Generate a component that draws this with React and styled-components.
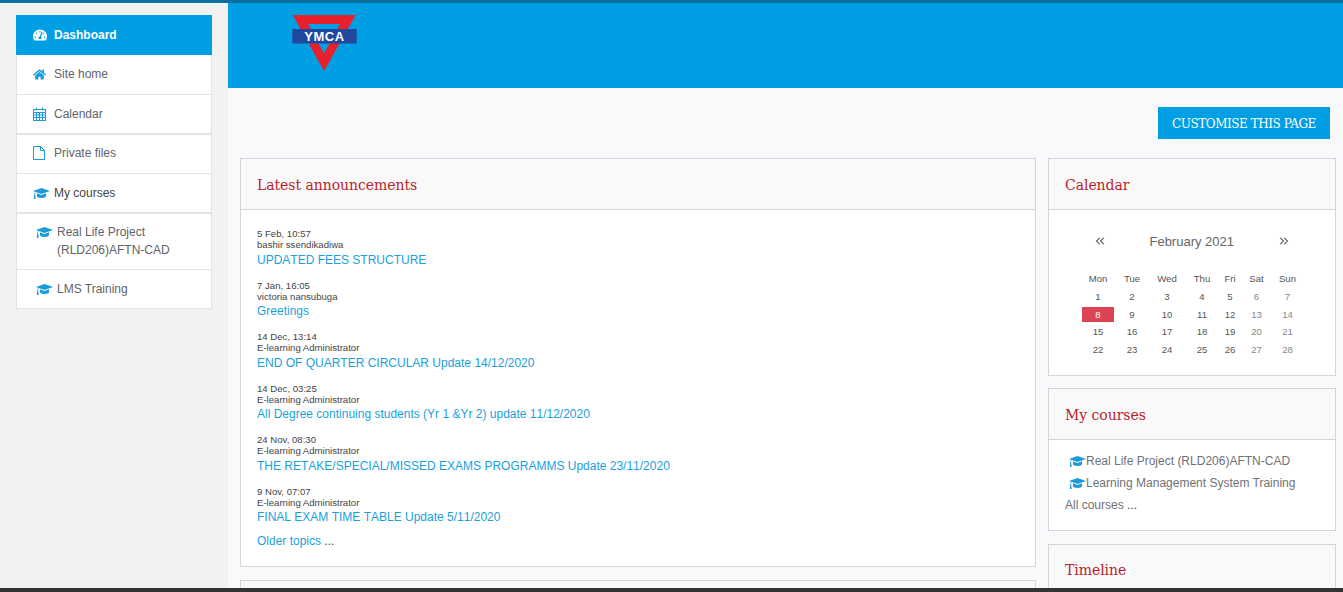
import React from "react";
import styled, { createGlobalStyle } from "styled-components";
import { FaTachometerAlt, FaHome } from "react-icons/fa";
import { ChevronsLeft, ChevronsRight } from "lucide-react";

const Global = createGlobalStyle`
  html, body { margin: 0; padding: 0; height: 592px; overflow: hidden; }
  body { font-family: "Liberation Sans", Arial, sans-serif; font-size: 12px; color: #666; background: #f2f2f3; }
  * { box-sizing: border-box; }
`;

const Page = styled.div`
  display: flex;
  width: 1343px;
  height: 592px;
  overflow: hidden;
`;
const TopLine = styled.div`
  position: fixed; left: 0; right: 0; top: 0; height: 3px; background: #0a6f9e; z-index: 3;
`;
const BottomLine = styled.div`
  position: fixed; left: 0; right: 0; bottom: 0; height: 4px; background: #333; z-index: 3;
`;
const Sidebar = styled.nav`
  width: 228px;
  flex: none;
  padding: 15px 16px 0;
  background: #f2f2f3;
`;
const NavList = styled.ul`
  list-style: none; margin: 0; padding: 0; width: 196px;
`;
const NavItem = styled.li`
  display: flex;
  align-items: ${p => (p.$tall ? "flex-start" : "center")};
  height: ${p => p.$h}px;
  padding: ${p => (p.$tall ? 9 : 0)}px 0 ${p => p.$pb || 0}px ${p => (p.$child ? 19 : p.$active ? 17 : 16)}px;
  color: ${p => (p.$active ? "#fff" : p.$dark ? "#444" : "#5e6468")};
  font-weight: ${p => (p.$active ? 700 : 400)};
  line-height: 18px;
  background: ${p => (p.$active ? "#009ee3" : "#fff")};
  border: ${p => (p.$active ? "none" : "1px solid #e2e3e4")};
  border-top: none;
  border-bottom-width: ${p => (p.$thick ? 2 : 1)}px;
`;
const NavIcon = styled.span`
  display: inline-flex;
  justify-content: flex-start;
  width: 21px;
  flex: none;
  font-size: ${p => p.$size || 14}px;
  color: ${p => (p.$active ? "#fff" : "#1c9ad8")};
  margin-top: ${p => (p.$tall ? "3px" : "0")};
`;
const Glyph = styled.svg`
  display: block;
  fill: ${p => (p.$line ? "none" : "currentColor")};
  stroke: ${p => (p.$line ? "currentColor" : "none")};
`;
const Content = styled.div`
  flex: 1;
  min-width: 0;
  background: #f7f9fb;
`;
const Banner = styled.header`
  height: 88px;
  background: #009ee3;
  padding: 15px 0 0 64px;
`;
const Toolbar = styled.div`
  display: flex;
  justify-content: flex-end;
  padding: 19px 13px 19px 0;
`;
const CustomButton = styled.button`
  width: 172px;
  height: 32px;
  padding: 2px 0 0;
  border: none;
  background: #009ee3;
  color: #fff;
  font-family: "DejaVu Serif", serif;
  font-size: 12px;
  letter-spacing: -0.45px;
`;
const Columns = styled.div`
  display: flex;
  align-items: flex-start;
  gap: 12px;
  padding-left: 12px;
`;
const MainCol = styled.div`
  width: 796px;
  flex: none;
  display: flex;
  flex-direction: column;
  gap: 13px;
`;
const SideCol = styled.div`
  width: 288px;
  flex: none;
  display: flex;
  flex-direction: column;
  gap: 12px;
`;
const Card = styled.section`
  border: 1px solid #d3d6da;
  background: #fff;
`;
const LastCard = styled(Card)`
  margin-top: 1px;
`;
const CardHead = styled.div`
  height: 51px;
  display: flex;
  align-items: center;
  padding: ${p => (p.$noline ? "0 0 2px 16px" : "2px 0 0 16px")};
  background: #f9f9fa;
  border-bottom: ${p => (p.$noline ? "none" : "1px solid #d3d6da")};
`;
const CardTitle = styled.h3`
  margin: 0;
  font-family: "DejaVu Serif", serif;
  font-weight: 400;
  font-size: 14px;
  letter-spacing: -0.05px;
  color: #b81f2b;
`;
const AnnBody = styled.div`
  padding: 18px 16px 18px;
  height: 356px;
`;
const Post = styled.div`
  margin-bottom: 11.1px;
`;
const PostMeta = styled.div`
  font-size: 9.6px;
  line-height: 11px;
  color: #444;
`;
const PostLink = styled.a`
  display: block;
  font-size: 12px;
  font-kerning: none;
  line-height: 18px;
  margin-top: 0.5px;
  color: #1a9fdc;
`;
const Older = styled.div`
  font-size: 12px;
  line-height: 18px;
  color: #1a9fdc;
  margin-top: -6px;
`;
const Dots = styled.span`
  color: #444;
`;
const CalBody = styled.div`
  height: 165px;
  padding: 22px 0 0 32px;
`;
const CalNav = styled.div`
  display: flex;
  justify-content: space-between;
  align-items: center;
  width: 197.5px;
  margin-left: 12px;
  height: 18px;
  font-size: 13px;
  color: #666;
`;
const CalGrid = styled.div`
  display: grid;
  grid-template-columns: 34px 34px 36px 34px 22px 31px 31px;
  margin-top: 20px;
`;
const CalCell = styled.div`
  height: 17.8px;
  line-height: 18px;
  text-align: center;
  font-size: 9.6px;
  color: ${p => (p.$today ? "#fff" : p.$weekend ? "#888" : "#555")};
  background: ${p => (p.$today ? "#dc4453" : "transparent")};
  ${p => p.$today && "height: 15px; line-height: 15px; margin: 1px 1px 1.8px;"}
`;
const CoursesBody = styled.div`
  padding: 10px 16px 0;
  height: 90px;
`;
const CourseRow = styled.div`
  display: flex;
  align-items: center;
  height: 22px;
  padding-left: 4px;
  font-size: 12px;
  color: #6f7275;
`;
const CourseIcon = styled.span`
  display: inline-flex;
  width: 17px;
  color: #1c9ad8;
`;
const AllCourses = styled.div`
  height: 22px;
  line-height: 22px;
  font-size: 12px;
  color: #6f7275;
`;
const Logo = styled.svg`
  display: block;
`;

const Cap = () => (
  <Glyph width="17" height="13" viewBox="0 0 17 13">
    <path d="M8.5 1 L17 4 L8.5 7 L2.8 5 C2.3 5.6 2 6.5 1.9 7.3 C2.2 7.5 2.4 7.8 2.3 8.2 L2.6 12 H0.8 L1.2 8.2 C1 7.9 1 7.5 1.3 7.3 C1.4 6.3 1.7 5.3 2.2 4.7 L0 4 Z" />
    <path d="M4 6.3 L8.5 7.9 L13 6.3 L13.1 9 C13.1 10.2 11 11 8.5 11 C6 11 3.9 10.2 3.9 9 Z" />
  </Glyph>
);
const Cal = () => (
  <Glyph $line width="13" height="14" viewBox="0 0 13 14" strokeWidth="1">
    <rect x="0.5" y="2.5" width="12" height="11" />
    <path d="M0.5 5.5 H12.5 M0.5 8 H12.5 M0.5 10.5 H12.5 M3.5 5.5 V13.5 M6.5 5.5 V13.5 M9.5 5.5 V13.5 M3.5 0.5 V3.5 M9.5 0.5 V3.5" />
  </Glyph>
);
const FileIcon = () => (
  <Glyph $line width="12" height="14" viewBox="0 0 12 14" strokeWidth="1">
    <path d="M0.5 0.5 H7.5 L11.5 4.5 V13.5 H0.5 Z M7.5 0.5 V4.5 H11.5" />
  </Glyph>
);

const nav = [
  { label: "Dashboard", icon: <FaTachometerAlt />, h: 40, active: true },
  { label: "Site home", icon: <FaHome />, size: 13, h: 40, pb: 1 },
  { label: "Calendar", icon: <Cal />, h: 40, thick: true },
  { label: "Private files", icon: <FileIcon />, h: 39, pb: 2 },
  { label: "My courses", icon: <Cap />, h: 40, thick: true, dark: true },
  { label: <>Real Life Project<br />(RLD206)AFTN-CAD</>, icon: <Cap />, h: 56, child: true, tall: true },
  { label: "LMS Training", icon: <Cap />, h: 39, child: true },
];
const posts = [
  ["5 Feb, 10:57", "bashir ssendikadiwa", "UPDATED FEES STRUCTURE"],
  ["7 Jan, 16:05", "victoria nansubuga", "Greetings"],
  ["14 Dec, 13:14", "E-learning Administrator", "END OF QUARTER CIRCULAR Update 14/12/2020"],
  ["14 Dec, 03:25", "E-learning Administrator", "All Degree continuing students (Yr 1 &Yr 2) update 11/12/2020"],
  ["24 Nov, 08:30", "E-learning Administrator", "THE RETAKE/SPECIAL/MISSED EXAMS PROGRAMMS Update 23/11/2020"],
  ["9 Nov, 07:07", "E-learning Administrator", "FINAL EXAM TIME TABLE Update 5/11/2020"],
];
const days = ["Mon", "Tue", "Wed", "Thu", "Fri", "Sat", "Sun"];
const dates = Array.from({ length: 28 }, (_, i) => i + 1);

export default function App() {
  return (
    <Page>
      <Global />
      <TopLine />
      <Sidebar>
        <NavList>
          {nav.map((n, i) => (
            <NavItem key={i} $h={n.h} $pb={n.pb} $active={n.active} $thick={n.thick} $child={n.child} $tall={n.tall} $dark={n.dark}>
              <NavIcon $size={n.size} $active={n.active} $tall={n.tall}>{n.icon}</NavIcon>
              <span>{n.label}</span>
            </NavItem>
          ))}
        </NavList>
      </Sidebar>
      <Content>
        <Banner>
          <Logo width="65" height="56" viewBox="0 0 65 56" aria-label="YMCA">
            <path d="M0.7 0 H63.7 L32 56 Z M16 9 H48 L32 38.5 Z" fill="#e8202e" fillRule="evenodd" />
            <rect x="0.3" y="14" width="64.4" height="14.5" fill="#2148a0" />
            <text x="32.5" y="26" textAnchor="middle" fill="#fff" fontFamily="Liberation Sans, Arial, sans-serif" fontWeight="700" fontSize="13" letterSpacing="0.6">YMCA</text>
          </Logo>
        </Banner>
        <Toolbar>
          <CustomButton>CUSTOMISE THIS PAGE</CustomButton>
        </Toolbar>
        <Columns>
          <MainCol>
            <Card>
              <CardHead><CardTitle>Latest announcements</CardTitle></CardHead>
              <AnnBody>
                {posts.map((p, i) => (
                  <Post key={i}>
                    <PostMeta>{p[0]}</PostMeta>
                    <PostMeta>{p[1]}</PostMeta>
                    <PostLink>{p[2]}</PostLink>
                  </Post>
                ))}
                <Older>Older topics <Dots>...</Dots></Older>
              </AnnBody>
            </Card>
            <Card>
              <CardHead $noline />
            </Card>
          </MainCol>
          <SideCol>
            <Card>
              <CardHead><CardTitle>Calendar</CardTitle></CardHead>
              <CalBody>
                <CalNav>
                  <ChevronsLeft size={14} strokeWidth={2} />
                  <span>February 2021</span>
                  <ChevronsRight size={14} strokeWidth={2} />
                </CalNav>
                <CalGrid>
                  {days.map(d => <CalCell key={d}>{d}</CalCell>)}
                  {dates.map(d => {
                    const col = (d - 1) % 7;
                    return <CalCell key={d} $today={d === 8} $weekend={col >= 5}>{d}</CalCell>;
                  })}
                </CalGrid>
              </CalBody>
            </Card>
            <Card>
              <CardHead><CardTitle>My courses</CardTitle></CardHead>
              <CoursesBody>
                <CourseRow><CourseIcon><Cap /></CourseIcon>Real Life Project (RLD206)AFTN-CAD</CourseRow>
                <CourseRow><CourseIcon><Cap /></CourseIcon>Learning Management System Training</CourseRow>
                <AllCourses>All courses <Dots>...</Dots></AllCourses>
              </CoursesBody>
            </Card>
            <LastCard>
              <CardHead $noline><CardTitle>Timeline</CardTitle></CardHead>
            </LastCard>
          </SideCol>
        </Columns>
      </Content>
      <BottomLine />
    </Page>
  );
}
